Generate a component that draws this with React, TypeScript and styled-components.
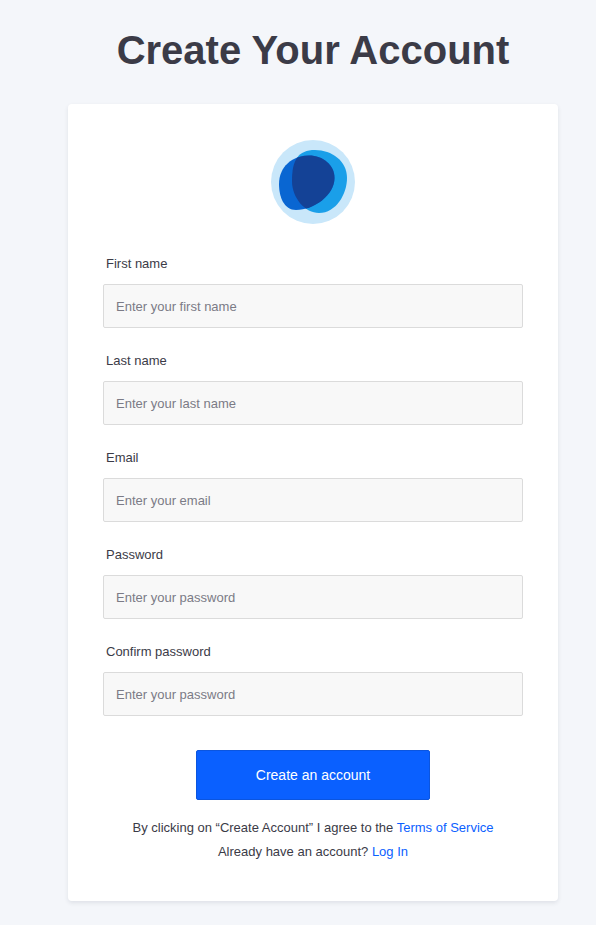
import React from "react";
import styled, { createGlobalStyle } from "styled-components";

const GlobalStyle = createGlobalStyle`
  *, *::before, *::after { box-sizing: border-box; }
  body {
    margin: 0;
    background: #f4f6fa;
    color: #3b3b47;
    font-family: "Liberation Sans", Arial, sans-serif;
    font-size: 13px;
    line-height: 24px;
  }
`;

const Page = styled.main`
  display: flex;
  flex-direction: column;
  align-items: center;
  gap: 30px;
  padding: 26px 38px 24px 68px;
`;

const Title = styled.h1`
  margin: 0;
  font-size: 40px;
  line-height: 48px;
  font-weight: 700;
  text-align: center;
`;

const Card = styled.form`
  display: flex;
  flex-direction: column;
  align-items: center;
  width: 100%;
  max-width: 490px;
  padding: 36px 35px;
  border-radius: 4px;
  background: #fff;
  box-shadow: 0 2px 4px rgba(40, 45, 70, 0.1);
`;

const Fields = styled.div`
  display: flex;
  flex-direction: column;
  gap: 21px;
  width: 100%;
  margin: 28px 0 34px;
`;

const Field = styled.div`
  display: flex;
  flex-direction: column;
  gap: 8px;
`;

const Label = styled.label`
  padding-left: 3px;
`;

const Input = styled.input`
  width: 100%;
  height: 44px;
  padding: 0 12px;
  border: 1px solid #dbdbdb;
  border-radius: 2px;
  background: #f8f8f8;
  color: #3b3b47;
  font: inherit;

  &::placeholder {
    color: #7b7b86;
    opacity: 1;
  }
`;

const SubmitButton = styled.button`
  width: 234px;
  max-width: 100%;
  height: 50px;
  border: 1px solid #0b55df;
  border-radius: 2px;
  background: #0a60ff;
  color: #fff;
  font-family: inherit;
  font-size: 14px;
  cursor: pointer;
`;

const Footer = styled.div`
  margin: 16px 0 0;
  padding-bottom: 1px;
  text-align: center;
`;

const Note = styled.p`
  margin: 0;
`;

const Link = styled.a`
  color: #0a60ff;
  text-decoration: none;
`;

const fields = [
  { id: "firstName", label: "First name", type: "text", placeholder: "Enter your first name" },
  { id: "lastName", label: "Last name", type: "text", placeholder: "Enter your last name" },
  { id: "email", label: "Email", type: "email", placeholder: "Enter your email" },
  { id: "password", label: "Password", type: "password", placeholder: "Enter your password" },
  { id: "confirmPassword", label: "Confirm password", type: "password", placeholder: "Enter your password" },
];

const lightBlob = "M21 41C21 20 27 10 44 10C61 10 76 21 76 38C76 54 65 73 48 73C34 73 21 58 21 41Z";
const darkBlob = "M8 44C8 27 21 15.500 38 15.500C52 15.500 63.500 25 63.500 38C63.500 55 43 70 25 70C13 70 8 57 8 44Z";

const Logo = () => (
  <svg width="84" height="84" viewBox="0 0 84 84" aria-hidden="true">
    <defs>
      <clipPath id="logoOverlap">
        <path d={lightBlob} />
      </clipPath>
    </defs>
    <circle cx="42" cy="42" r="42" fill="#c9e7fa" />
    <path d={lightBlob} fill="#1a9fe9" />
    <path d={darkBlob} fill="#0966d2" />
    <path d={darkBlob} fill="#144296" clipPath="url(#logoOverlap)" />
  </svg>
);

export default function App() {
  return (
    <>
      <GlobalStyle />
      <Page>
        <Title>Create Your Account</Title>
        <Card onSubmit={(event: React.FormEvent) => event.preventDefault()}>
          <Logo />
          <Fields>
            {fields.map(({ id, label, type, placeholder }) => (
              <Field key={id}>
                <Label htmlFor={id}>{label}</Label>
                <Input id={id} name={id} type={type} placeholder={placeholder} />
              </Field>
            ))}
          </Fields>
          <SubmitButton type="submit">Create an account</SubmitButton>
          <Footer>
            <Note>
              By clicking on “Create Account” I agree to the <Link href="#terms">Terms of Service</Link>
            </Note>
            <Note>
              Already have an account? <Link href="#login">Log In</Link>
            </Note>
          </Footer>
        </Card>
      </Page>
    </>
  );
}
